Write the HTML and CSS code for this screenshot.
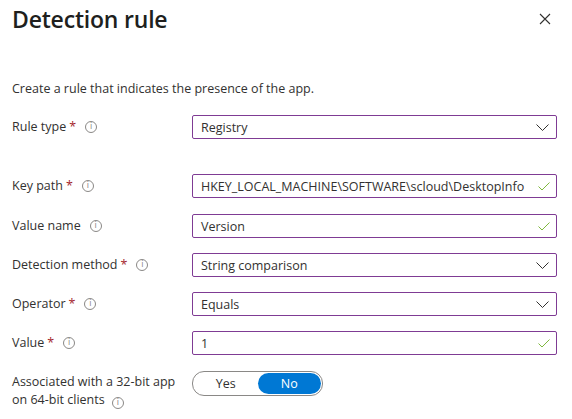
FILE: index.html
```html
<!DOCTYPE html>
<html lang="en">
<head>
    <meta charset="UTF-8">
    <title>Detection rule</title>
    <link rel="stylesheet" href="styles.css">
</head>
<body>
    <div class="panel">
        <header class="panel-header">
            <h1>Detection rule</h1>
            <button class="close-button" aria-label="Close">
                <svg width="12" height="12" viewBox="0 0 12 12"><path d="M1 1L11 11M11 1L1 11" stroke="#323130" stroke-width="1.1" fill="none"/></svg>
            </button>
        </header>
        <p class="intro">Create a rule that indicates the presence of the app.</p>

        <div class="form-row spaced">
            <label>Rule type <span class="req">*</span> <span class="info">i</span></label>
            <div class="field">
                <span>Registry</span>
                <svg class="chev" width="13" height="7" viewBox="0 0 13 7"><path d="M0.5 0.5L6.5 6.5L12.5 0.5" stroke="#323130" stroke-width="1" fill="none"/></svg>
            </div>
        </div>

        <div class="form-row key-row">
            <label>Key path <span class="req">*</span> <span class="info">i</span></label>
            <div class="field">
                <span>HKEY_LOCAL_MACHINE\SOFTWARE\scloud\DesktopInfo</span>
                <svg class="check" width="12" height="9" viewBox="0 0 12 9"><path d="M0.5 4.5L4 8L11.5 0.5" stroke="#7fb83f" stroke-width="1" fill="none"/></svg>
            </div>
        </div>

        <div class="form-row">
            <label>Value name <span class="info">i</span></label>
            <div class="field">
                <span>Version</span>
                <svg class="check" width="12" height="9" viewBox="0 0 12 9"><path d="M0.5 4.5L4 8L11.5 0.5" stroke="#7fb83f" stroke-width="1" fill="none"/></svg>
            </div>
        </div>

        <div class="form-row">
            <label>Detection method <span class="req">*</span> <span class="info">i</span></label>
            <div class="field">
                <span>String comparison</span>
                <svg class="chev" width="13" height="7" viewBox="0 0 13 7"><path d="M0.5 0.5L6.5 6.5L12.5 0.5" stroke="#323130" stroke-width="1" fill="none"/></svg>
            </div>
        </div>

        <div class="form-row">
            <label>Operator <span class="req">*</span> <span class="info">i</span></label>
            <div class="field">
                <span>Equals</span>
                <svg class="chev" width="13" height="7" viewBox="0 0 13 7"><path d="M0.5 0.5L6.5 6.5L12.5 0.5" stroke="#323130" stroke-width="1" fill="none"/></svg>
            </div>
        </div>

        <div class="form-row">
            <label>Value <span class="req">*</span> <span class="info">i</span></label>
            <div class="field">
                <span>1</span>
                <svg class="check" width="12" height="9" viewBox="0 0 12 9"><path d="M0.5 4.5L4 8L11.5 0.5" stroke="#7fb83f" stroke-width="1" fill="none"/></svg>
            </div>
        </div>

        <div class="form-row toggle-row">
            <label>Associated with a 32-bit app<br>on 64-bit clients <span class="info">i</span></label>
            <div class="toggle">
                <span class="toggle-option">Yes</span>
                <span class="toggle-option selected">No</span>
            </div>
        </div>
    </div>
</body>
</html>
```

FILE: styles.css
```css
body {
    margin: 0;
    font-family: 'Open Sans', 'Noto Sans', sans-serif;
    font-size: 12.5px;
    color: #323130;
    background-color: #fff;
}

.panel {
    padding: 0 15px 0 12px;
}

.panel-header {
    display: flex;
    justify-content: space-between;
    align-items: center;
    height: 38px;
}

.panel-header h1 {
    margin: 0;
    font-size: 23px;
    font-weight: 600;
    color: #201f1e;
    letter-spacing: -0.2px;
}

.close-button {
    background: none;
    border: none;
    padding: 0;
    margin-right: 5px;
    width: 14px;
    height: 14px;
    display: flex;
    align-items: center;
    justify-content: center;
}

.intro {
    margin: 42px 0 17px;
    line-height: 18px;
}

.form-row {
    display: grid;
    grid-template-columns: 180px 365px;
    align-items: center;
    margin-bottom: 15px;
}

.form-row.spaced {
    margin-bottom: 35px;
}

.form-row.key-row {
    margin-bottom: 16px;
}

.form-row label {
    display: flex;
    align-items: center;
    gap: 3px;
    line-height: 18px;
}

.req {
    color: #a4262c;
}

.info {
    display: inline-flex;
    align-items: center;
    justify-content: center;
    width: 10px;
    height: 10px;
    margin-left: 6px;
    border: 1px solid #8a8886;
    border-radius: 50%;
    font-size: 8px;
    line-height: 1;
    color: #8a8886;
    font-family: 'DejaVu Sans', sans-serif;
}

.field {
    height: 22px;
    border: 1px solid #7f3b94;
    border-radius: 2px;
    display: flex;
    align-items: center;
    justify-content: space-between;
    padding: 0 6px 0 8px;
}

.chev {
    margin-right: 1px;
}

.toggle-row {
    align-items: start;
}

.toggle-row label {
    display: block;
    padding-top: 3px;
}

.toggle-row .info {
    margin-left: 4px;
    vertical-align: -1px;
}

.toggle {
    width: 127px;
    height: 21px;
    margin-top: 1px;
    border: 1px solid #8a8886;
    border-radius: 12px;
    display: flex;
    padding: 1px;
}

.toggle-option {
    flex: 1;
    display: flex;
    align-items: center;
    justify-content: center;
    border-radius: 11px;
}

.toggle-option.selected {
    background-color: #0078d4;
    color: #fff;
}
```
